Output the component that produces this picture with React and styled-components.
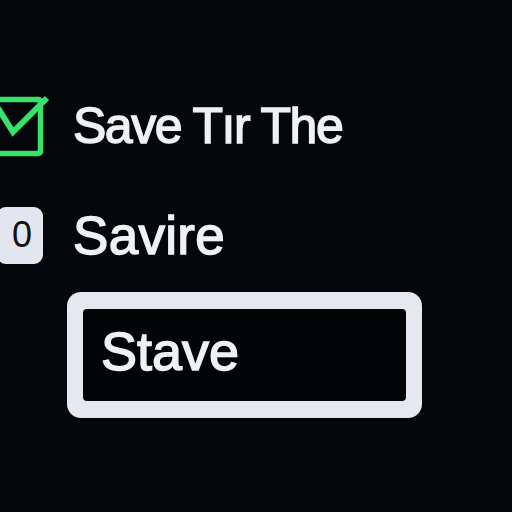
import React from "react";
import styled, { createGlobalStyle } from "styled-components";

const Global = createGlobalStyle`
  html, body { margin: 0; padding: 0; background: #05070a; }
  body { width: 512px; height: 512px; overflow: hidden; font-family: "Liberation Sans", Arial, sans-serif; }
`;

const Page = styled.div`
  width: 512px;
  height: 512px;
  background: #05070a;
  display: flex;
  flex-direction: column;
  padding-top: 92px;
  box-sizing: border-box;
`;

const Row = styled.div`
  display: grid;
  grid-template-columns: 44px 1fr;
  column-gap: 29px;
  align-items: center;
  margin-top: ${(p) => p.$top || 0}px;
  height: ${(p) => p.$h}px;
`;

const Label = styled.span`
  color: #eef1f6;
  font-size: ${(p) => p.$size}px;
  font-weight: 400;
  line-height: 1;
  letter-spacing: ${(p) => p.$ls || 0}px;
  white-space: nowrap;
  -webkit-text-stroke: 1.4px #eef1f6;
  text-shadow: 0 0 1px rgba(170, 200, 255, 0.5);
`;

const CheckIcon = styled.svg`
  display: block;
  overflow: visible;
`;

const Badge = styled.div`
  margin-left: -3px;
  width: 46px;
  height: 57px;
  border-radius: 9px;
  background: #e3e6ee;
  display: flex;
  align-items: center;
  justify-content: center;
  padding-left: 4px;
  box-sizing: border-box;
  color: #101216;
  font-size: 36px;
  line-height: 1;
`;

const Frame = styled.div`
  grid-column: 2;
  margin-left: -6px;
  width: 355px;
  height: 126px;
  box-sizing: border-box;
  padding: 17px 16px;
  border-radius: 14px;
  background: #e5e8ee;
`;

const Field = styled.div`
  height: 100%;
  box-sizing: border-box;
  background: #030405;
  border-radius: 4px;
  padding: 15px 18px;
`;

export default function App() {
  return (
    <>
      <Global />
      <Page>
        <Row $h={68}>
          <CheckIcon width="44" height="68" viewBox="0 0 44 68">
            <rect x="-20" y="7.5" width="60.5" height="54" rx="2" fill="none" stroke="#39e06a" strokeWidth="5.5" />
            <polyline points="-4,13 13,40 47,6" fill="none" stroke="#39e06a" strokeWidth="6" strokeLinejoin="miter" />
          </CheckIcon>
          <Label $size={50} $ls={-1.5}>Save Tır The</Label>
        </Row>
        <Row $top={40} $h={70}>
          <Badge>0</Badge>
          <Label $size={53} $ls={0.3}>Savire</Label>
        </Row>
        <Row $top={22} $h={126}>
          <Frame>
            <Field>
              <Label $size={54} $ls={0}>Stave</Label>
            </Field>
          </Frame>
        </Row>
      </Page>
    </>
  );
}
